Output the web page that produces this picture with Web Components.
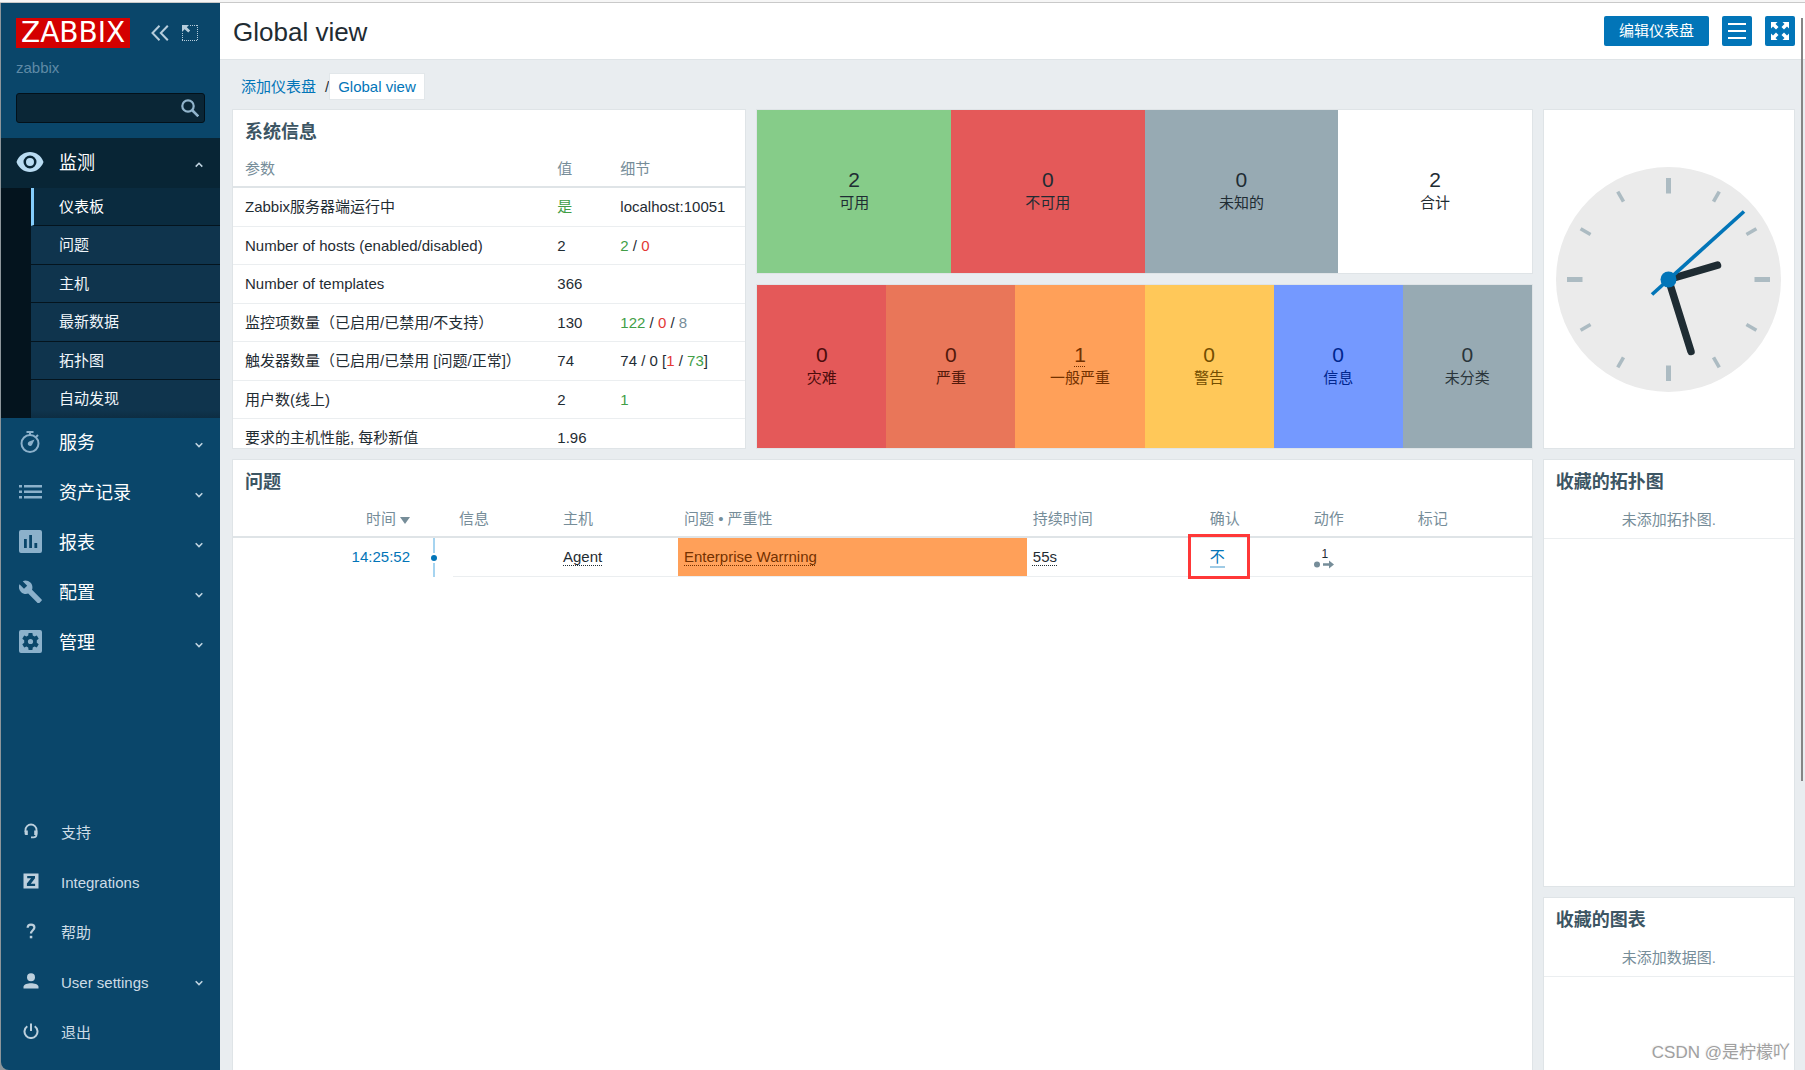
<!DOCTYPE html>
<html lang="zh-CN">
<head>
<meta charset="utf-8">
<title>Global view</title>
<style>
  html, body { margin: 0; height: 100%; }
  body {
    overflow: hidden;
    font: 15px/20px "Liberation Sans", "Noto Sans CJK SC", sans-serif;
    color: #1f2c33;
    background: #e9edf0;
  }
</style>
</head>
<body>
<zbx-app>
  <zbx-sidebar slot="side"></zbx-sidebar>
  <zbx-header slot="top">Global view</zbx-header>
  <zbx-breadcrumbs slot="path"></zbx-breadcrumbs>
  <zbx-widget style="grid-column: span 4; grid-row: span 2" heading="系统信息"><zbx-sysinfo></zbx-sysinfo></zbx-widget>
  <zbx-widget style="grid-column: span 6">
    <zbx-tiles>
      <zbx-tile count="2" style="background:#86cc89">可用</zbx-tile>
      <zbx-tile count="0" style="background:#e45959">不可用</zbx-tile>
      <zbx-tile count="0" style="background:#97aab3">未知的</zbx-tile>
      <zbx-tile count="2">合计</zbx-tile>
    </zbx-tiles>
  </zbx-widget>
  <zbx-widget style="grid-column: span 2; grid-row: span 2"><zbx-clock></zbx-clock></zbx-widget>
  <zbx-widget style="grid-column: span 6">
    <zbx-tiles>
      <zbx-tile count="0" style="background:#e45959;color:#4b0c0c">灾难</zbx-tile>
      <zbx-tile count="0" style="background:#e97659;color:#52190b">严重</zbx-tile>
      <zbx-tile count="1" linked style="background:#ffa059;color:#733100">一般严重</zbx-tile>
      <zbx-tile count="0" style="background:#ffc859;color:#734d00">警告</zbx-tile>
      <zbx-tile count="0" style="background:#7499ff;color:#00268e">信息</zbx-tile>
      <zbx-tile count="0" style="background:#97aab3;color:#2a353a">未分类</zbx-tile>
    </zbx-tiles>
  </zbx-widget>
  <zbx-widget style="grid-column: span 10; grid-row: span 2" heading="问题"><zbx-problems></zbx-problems></zbx-widget>
  <zbx-widget style="grid-column: span 2" heading="收藏的拓扑图"><zbx-empty>未添加拓扑图.</zbx-empty></zbx-widget>
  <zbx-widget style="grid-column: span 2" heading="收藏的图表"><zbx-empty>未添加数据图.</zbx-empty></zbx-widget>
</zbx-app>

<script>
const define = (name, html) => {
  const tpl = document.createElement('template');
  customElements.define(name, class extends HTMLElement {
    connectedCallback() {
      if (this.shadowRoot) return;
      tpl.innerHTML = typeof html === 'function' ? html(this) : html;
      this.attachShadow({ mode: 'open' }).append(tpl.content.cloneNode(true));
    }
  });
};

const ICONS = {
  eye: [28, 20, '<path fill-rule="evenodd" fill="currentColor" d="M14 0C8 0 2.600 3.800 0.500 10 2.600 16 8 20 14 20s11.400-4 13.500-10C25.400 3.800 20 0 14 0zm0 16.500a6.500 6.500 0 1 1 0-13 6.500 6.500 0 0 1 0 13zM14 6a4 4 0 1 0 0 8 4 4 0 0 0 0-8z"/>'],
  timer: [22, 22, '<g fill="none" stroke="currentColor" stroke-width="2"><circle cx="11" cy="12.500" r="8.500"/><path d="M7.500 1h7M11 1v3M17 6l2-2"/></g><path fill="currentColor" d="M15.500 8.500 13.200 13.500a2.300 2.300 0 1 1-3-3z"/>'],
  list: [24, 22, '<path fill="currentColor" d="M1 4h3v2.500H1zM6 4h18v2.500H6zM1 9.500h3V12H1zM6 9.500h18V12H6zM1 15h3v2.500H1zM6 15h18v2.500H6z"/>'],
  chart: [23, 23, '<path fill-rule="evenodd" fill="currentColor" d="M2 0h19a2 2 0 0 1 2 2v19a2 2 0 0 1-2 2H2a2 2 0 0 1-2-2V2a2 2 0 0 1 2-2zM5 9v9h2.800V9zM10.200 5v13h2.800V5zM15.400 13v5h2.800v-5z"/>'],
  wrench: [23, 23, '<path fill="currentColor" d="M22.600 19.400 13 9.800c.9-2.400.4-5.200-1.600-7.200C9.300.5 6.200 0 3.700 1.200L8.200 5.700 5 8.800.500 4.300C-.7 6.800-.1 9.900 2 12c2 2 4.800 2.500 7.200 1.600l9.500 9.500c.4.4 1 .4 1.500 0l2.400-2.300c.4-.4.4-1 0-1.400z"/>'],
  gear: [23, 23, '<path fill-rule="evenodd" fill="currentColor" d="M2 0h19a2 2 0 0 1 2 2v19a2 2 0 0 1-2 2H2a2 2 0 0 1-2-2V2a2 2 0 0 1 2-2zM9.600 3l-.4 2.400-1.700 1-2.300-.9-1.900 3.300 1.900 1.500v2.400l-1.900 1.500 1.900 3.300 2.300-.9 1.700 1 .4 2.400h3.800l.4-2.400 1.700-1 2.300.9 1.900-3.300-1.900-1.500v-2.400l1.900-1.500-1.900-3.300-2.300.9-1.700-1-.4-2.400zM11.500 8.900a2.600 2.600 0 1 1 0 5.200 2.600 2.600 0 0 1 0-5.200z"/>'],
  headset: [16, 16, '<path fill="none" stroke="currentColor" stroke-width="1.800" d="M2.500 9V7a5.500 5.500 0 0 1 11 0v4.500c0 2-1.200 2.900-3 2.900H8"/><path fill="currentColor" d="M1.600 7.500h3.200V12H3a1.500 1.500 0 0 1-1.400-1.600zM14.400 7.500h-3.200V12H13a1.500 1.500 0 0 0 1.400-1.600z"/>'],
  z: [16, 16, '<path fill-rule="evenodd" fill="currentColor" d="M.500.500h15v15H.500zM4.200 3v2.300h3.900L3.900 10.600V13h8.200v-2.300H7.800L12 5.300V3z"/>'],
  help: [16, 16, '<path fill="none" stroke="currentColor" stroke-width="2.200" d="M4.600 4.800C4.700 2.600 6 1.600 8 1.600s3.400 1.100 3.400 3c0 2.600-3.400 2.800-3.400 6"/><path fill="currentColor" d="M6.800 12.800h2.500v2.500H6.800z"/>'],
  user: [16, 16, '<circle cx="8" cy="4.200" r="4" fill="currentColor"/><path fill="currentColor" d="M.500 15.500v-1.800C.500 11.200 5 10.200 8 10.200s7.500 1 7.500 3.500v1.800z"/>'],
  power: [16, 16, '<path fill="none" stroke="currentColor" stroke-width="2" d="M8 .500v7.500M4.300 3.200a6.500 6.500 0 1 0 7.400 0"/>'],
  down: [8, 8, '<path fill="none" stroke="currentColor" stroke-width="1.600" d="M.700 2.300 4 5.600l3.300-3.300"/>'],
  up: [8, 8, '<path fill="none" stroke="currentColor" stroke-width="1.600" d="M.700 5.600 4 2.300l3.300 3.300"/>'],
  search: [18, 18, '<circle cx="7" cy="7" r="5.700" fill="none" stroke="currentColor" stroke-width="2.200"/><path stroke="currentColor" stroke-width="2.600" d="m11 11 6.300 6.300"/>'],
  collapse: [18, 16, '<path fill="none" stroke="currentColor" stroke-width="2" d="M8.500.800 1.500 8l7 7.200M16.800.800 9.800 8l7 7.200"/>'],
  compact: [16, 16, '<path fill="none" stroke="currentColor" stroke-width="1" stroke-dasharray="1 1" d="M8 .500h8M15.500 0v16M15 15.500H0M.500 15V8"/><path fill="currentColor" d="M0 0h7L4.800 2.200l3.400 3.400-1.900 1.900L2.600 4.300 0 7z"/>'],
  menu: [18, 16, '<path stroke="currentColor" stroke-width="2" d="M0 1h18M0 8h18M0 15h18"/>'],
  full: [18, 18, '<g fill="currentColor"><path d="M0 0h6.500L4.500 2l3 3L5 7.500l-3-3-2 2z"/><path d="M18 0v6.500l-2-2-3 3L10.500 5l3-3-2-2z"/><path d="M18 18h-6.500l2-2-3-3 2.500-2.500 3 3 2-2z"/><path d="M0 18v-6.500l2 2 3-3L7.500 13l-3 3 2 2z"/></g>'],
  action: [20, 9, '<circle cx="3" cy="4.500" r="3" fill="currentColor"/><path fill="currentColor" d="M9 3.300h6V.500l5 4-5 4V5.700H9z"/>']
};

define('zbx-icon', el => {
  const [w, h, body] = ICONS[el.getAttribute('name')];
  return `<style>:host{display:inline-flex;flex:none}svg{display:block}</style>
    <svg width="${w}" height="${h}" viewBox="0 0 ${w} ${h}" aria-hidden="true">${body}</svg>`;
});

define('zbx-app', `
  <style>
    :host { display: flex; flex-direction: column; height: 100vh; background: #8d969b; }
    .edge { flex: none; height: 2px; background: #f6f6f6; border-bottom: 1px solid #c9c9c9; }
    .body { flex: 1; min-height: 0; display: flex; padding-left: 1px; }
    main { position: relative; flex: 1; min-width: 0; display: flex; flex-direction: column; overflow: hidden; background: #e9edf0; }
    .grid {
      flex: 1; min-height: 0; overflow: hidden;
      display: grid; grid-template-columns: repeat(12, minmax(0, 1fr)); grid-template-rows: 165px 165px 428px 428px;
      gap: 10px; padding: 0 10px 0 12px;
    }
    .thumb { position: absolute; top: 15px; right: 2px; width: 2px; height: 763px; background: #858585; }
    .mark { position: absolute; right: 15px; bottom: 5px; font-size: 17px; line-height: 24px; color: #a0a0a0; text-shadow: 1px 1px 0 #fff, -1px -1px 0 #f4f4f4; }
  </style>
  <div class="edge"></div>
  <div class="body">
    <slot name="side"></slot>
    <main>
      <slot name="top"></slot>
      <slot name="path"></slot>
      <div class="grid"><slot></slot></div>
      <div class="thumb"></div>
      <div class="mark">CSDN @是柠檬吖</div>
    </main>
  </div>`);

define('zbx-sidebar', `
  <style>
    :host { display: flex; flex-direction: column; flex: none; width: 219px; background: #0a466a; border-bottom-left-radius: 8px; color: #fff; }
    .brand { display: flex; align-items: center; padding: 15px 22px 0 15px; color: #b6cddc; }
    .logo { background: #d40000; color: #fff; font: 28px/30px "DejaVu Sans", sans-serif; padding: 0 5px; text-decoration: none; margin-right: auto; }
    button { border: 0; padding: 0; background: none; color: inherit; display: flex; }
    .brand button + button { margin-left: 13px; }
    .server { padding: 10px 15px 0; color: #5f8aa6; }
    form { display: flex; align-items: center; margin: 15px 15px 15px 15px; height: 28px; border: 1px solid #03111a; border-radius: 3px; background: #0a2636; color: #91b4cc; padding-right: 5px; }
    input { flex: 1; min-width: 0; border: 0; outline: 0; background: none; color: #fff; font: inherit; padding: 0 8px; }
    .sub { background: #04141e; padding-left: 30px; }
    .sub a {
      display: flex; align-items: center; box-sizing: border-box; height: 38px; padding-left: 28px;
      border-bottom: 1px solid #04141e; background: #0f344d; color: #f0f6fa; text-decoration: none;
    }
    .sub a:nth-child(even) { height: 39px; }
    .sub a.on { border-left: 3px solid #84cdfb; padding-left: 25px; background: #0a2b3f; color: #fff; }
    .sub a:last-child { height: 38px; border-bottom: 0; background: linear-gradient(#0f344d 80%, #0d2d42); }
    .foot { margin-top: auto; padding-bottom: 12px; }
  </style>
  <div class="brand">
    <a class="logo" href="#">ZABBIX</a>
    <button aria-label="collapse"><zbx-icon name="collapse"></zbx-icon></button>
    <button aria-label="compact"><zbx-icon name="compact"></zbx-icon></button>
  </div>
  <div class="server">zabbix</div>
  <form><input type="text" aria-label="search"><button type="button" aria-label="search"><zbx-icon name="search"></zbx-icon></button></form>
  <nav>
    <zbx-menu-item icon="eye" caret="up" open>监测</zbx-menu-item>
    <div class="sub">
      <a href="#" class="on">仪表板</a><a href="#">问题</a><a href="#">主机</a><a href="#">最新数据</a><a href="#">拓扑图</a><a href="#">自动发现</a>
    </div>
    <zbx-menu-item icon="timer" caret="down">服务</zbx-menu-item>
    <zbx-menu-item icon="list" caret="down">资产记录</zbx-menu-item>
    <zbx-menu-item icon="chart" caret="down">报表</zbx-menu-item>
    <zbx-menu-item icon="wrench" caret="down">配置</zbx-menu-item>
    <zbx-menu-item icon="gear" caret="down">管理</zbx-menu-item>
  </nav>
  <nav class="foot">
    <zbx-menu-item minor icon="headset">支持</zbx-menu-item>
    <zbx-menu-item minor icon="z">Integrations</zbx-menu-item>
    <zbx-menu-item minor icon="help">帮助</zbx-menu-item>
    <zbx-menu-item minor icon="user" caret="down">User settings</zbx-menu-item>
    <zbx-menu-item minor icon="power">退出</zbx-menu-item>
  </nav>`);

define('zbx-menu-item', el => `
  <style>
    :host { display: block; --icon: #8cb1cb; }
    :host([open]) { background: #082535; --icon: #b9dcf2; }
    :host([minor]) { --icon: #bdd0dd; }
    a { display: flex; align-items: center; height: 50px; padding: 0 17px 0 15px; color: #fff; font-size: 18px; text-decoration: none; }
    :host([minor]) a { font-size: 15px; color: #cddce6; }
    .icon { width: 28px; display: flex; justify-content: center; color: var(--icon); margin-right: 15px; padding-bottom: 3px; }
    :host([minor]) .icon { width: 30px; padding-bottom: 4px; }
    .caret { margin-left: auto; display: flex; color: #bfd3e0; padding-top: 3px; }
    :host([minor]) .caret { padding-top: 0; }
  </style>
  <a href="#"><span class="icon"><zbx-icon name="${el.getAttribute('icon')}"></zbx-icon></span><slot></slot>
  ${el.hasAttribute('caret') ? `<span class="caret"><zbx-icon name="${el.getAttribute('caret')}"></zbx-icon></span>` : ''}</a>`);

define('zbx-header', `
  <style>
    :host { display: flex; align-items: center; flex: none; height: 56px; gap: 13px; padding: 0 10px 0 13px; background: #fff; border-bottom: 1px solid #dfe4e7; }
    h1 { margin: 0 auto 0 0; padding-top: 2px; font-size: 26px; line-height: 32px; font-weight: 400; }
    button { display: flex; align-items: center; justify-content: center; height: 30px; min-width: 30px; padding: 0; border: 0; border-radius: 2px; background: #0275b8; color: #fff; font: inherit; }
    .text { padding: 0 15px; }
  </style>
  <h1><slot></slot></h1>
  <button class="text">编辑仪表盘</button>
  <button aria-label="menu"><zbx-icon name="menu"></zbx-icon></button>
  <button aria-label="fullscreen"><zbx-icon name="full"></zbx-icon></button>`);

define('zbx-breadcrumbs', `
  <style>
    :host { display: flex; align-items: center; flex: none; height: 25px; padding: 14px 20px 10px 21px; }
    a { color: #0275b8; text-decoration: none; }
    span { padding: 0 1px 0 9px; }
    .on { background: #fff; padding: 2px 8px; box-shadow: 0 0 0 1px #e2e7ea; line-height: 21px; }
  </style>
  <a href="#">添加仪表盘</a><span>/</span><a class="on" href="#">Global view</a>`);

define('zbx-widget', el => `
  <style>
    :host { display: flex; flex-direction: column; min-width: 0; overflow: hidden; box-sizing: border-box; background: #fff; border: 1px solid #dfe4e7; }
    h4 { flex: none; margin: 0; padding: 12px 12px 8px; font-size: 18px; line-height: 21px; font-weight: 700; color: #3c5563; }
  </style>
  ${el.hasAttribute('heading') ? `<h4>${el.getAttribute('heading')}</h4>` : ''}<slot></slot>`);

define('zbx-tiles', `<style>:host { display: flex; flex: 1; }</style><slot></slot>`);

define('zbx-tile', el => `
  <style>
    :host { flex: 1; display: flex; flex-direction: column; align-items: center; justify-content: center; line-height: 22px; padding-bottom: 2px; }
    .n { font-size: 21px; line-height: 24px; }
    a { color: inherit; text-decoration: underline dotted 1px; text-underline-offset: 4px; }
  </style>
  ${el.hasAttribute('linked') ? `<a class="n" href="#">${el.getAttribute('count')}</a>` : `<span class="n">${el.getAttribute('count')}</span>`}
  <slot></slot>`);

define('zbx-clock', () => {
  let ticks = '';
  for (let i = 0; i < 12; i++) {
    const big = i % 3 === 0;
    ticks += `<rect transform="rotate(${i * 30})" x="${big ? -2.5 : -1.8}" y="-101.500" width="${big ? 5 : 3.6}" height="${big ? 15.5 : 11.5}"/>`;
  }
  return `
  <style>:host { display: flex; flex: 1; align-items: center; justify-content: center; } svg { width: 225px; height: 225px; }</style>
  <svg viewBox="-112.500 -112.500 225 225" role="img">
    <circle r="112.500" fill="#ebebeb"/><g fill="#acbbc2">${ticks}</g>
    <path stroke="#1f2c33" stroke-width="7.500" stroke-linecap="round" d="M0 0 49-14.300M0 0 22.500 72"/>
    <path stroke="#0275b8" stroke-width="3.700" d="M-16.500 15 75.500-68"/>
    <circle r="8" fill="#0275b8"/>
  </svg>`;
});

const TABLE = `
  table { width: 100%; table-layout: fixed; border-collapse: separate; border-spacing: 0; }
  th { height: 35px; padding: 0 6px; text-align: left; font-weight: 400; color: #768d99; border-bottom: 2px solid #dfe4e7; white-space: nowrap; }
  td { height: 37px; padding: 0 6px; border-bottom: 1px solid #ebeef0; white-space: nowrap; }
  tbody tr:nth-child(odd) td { height: 38px; }`;

define('zbx-sysinfo', `
  <style>
    :host { display: block; } ${TABLE}
    th:first-child, td:first-child { padding-left: 12px; }
    .g { color: #429e47; } .r { color: #e33734; } .y { color: #768d99; }
  </style>
  <table>
    <colgroup><col><col style="width:63px"><col style="width:131px"></colgroup>
    <thead><tr><th>参数</th><th>值</th><th>细节</th></tr></thead>
    <tbody>
      <tr><td>Zabbix服务器端运行中</td><td class="g">是</td><td>localhost:10051</td></tr>
      <tr><td>Number of hosts (enabled/disabled)</td><td>2</td><td><span class="g">2</span> / <span class="r">0</span></td></tr>
      <tr><td>Number of templates</td><td>366</td><td></td></tr>
      <tr><td>监控项数量（已启用/已禁用/不支持）</td><td>130</td><td><span class="g">122</span> / <span class="r">0</span> / <span class="y">8</span></td></tr>
      <tr><td>触发器数量（已启用/已禁用 [问题/正常]）</td><td>74</td><td>74 / 0 [<span class="r">1</span> / <span class="g">73</span>]</td></tr>
      <tr><td>用户数(线上)</td><td>2</td><td class="g">1</td></tr>
      <tr><td>要求的主机性能, 每秒新值</td><td>1.96</td><td></td></tr>
    </tbody>
  </table>`);

define('zbx-problems', `
  <style>
    :host { display: block; } ${TABLE}
    .time { text-align: right; border-bottom-color: transparent; }
    th.time { border-bottom-color: #dfe4e7; }
    .line { border-bottom: 0; padding: 0 0 0 15px; }
    th.line { border-bottom: 2px solid #dfe4e7; }
    .track { display: flex; flex-direction: column; align-items: center; gap: 2px; width: 6px; height: 39px; }
    .track::before, .track::after { content: ""; flex: 1; width: 2px; background: #a6d4f0; }
    .track i { width: 6px; height: 6px; border-radius: 50%; background: #0275b8; }
    a { color: #0275b8; text-decoration: none; }
    .dot { color: inherit; text-decoration: underline dotted 1px; text-underline-offset: 3px; text-decoration-skip-ink: none; }
    .sev { background: #ffa059 padding-box; color: #733100; }
    .sort { display: inline-block; border: 5px solid transparent; border-top: 7px solid #768d99; border-bottom: 0; margin-left: 4px; }
    .ack { position: relative; }
    .ack a { display: inline-block; line-height: 18px; border-bottom: 2px solid #a0cbe5; margin-top: 2px; }
    .ack::after { content: ""; position: absolute; left: -16px; top: -4px; width: 56px; height: 39px; border: 3px solid #ff3838; }
    .act { display: inline-flex; flex-direction: column; align-items: center; vertical-align: middle; color: #768d99; }
    .act b { font-size: 12px; line-height: 12px; font-weight: 400; color: #1f2c33; padding: 2px 0 0 2px; }
  </style>
  <table>
    <colgroup><col style="width:183px"><col style="width:37px"><col style="width:104px"><col style="width:121px"><col><col style="width:177px"><col style="width:104px"><col style="width:104px"><col style="width:120px"></colgroup>
    <thead><tr><th class="time">时间<span class="sort"></span></th><th class="line"></th><th>信息</th><th>主机</th><th>问题 • 严重性</th><th>持续时间</th><th>确认</th><th>动作</th><th>标记</th></tr></thead>
    <tbody><tr>
      <td class="time"><a href="#">14:25:52</a></td><td class="line"><div class="track"><i></i></div></td><td></td>
      <td><a class="dot" href="#">Agent</a></td><td class="sev"><a class="dot" href="#">Enterprise Warrning</a></td>
      <td><a class="dot" href="#">55s</a></td><td class="ack"><a href="#">不</a></td>
      <td><span class="act"><b>1</b><zbx-icon name="action"></zbx-icon></span></td><td></td>
    </tr></tbody>
  </table>`);

define('zbx-empty', `
  <style>:host { display: flex; align-items: center; justify-content: center; height: 37px; color: #768d99; border-bottom: 1px solid #ebeef0; }</style><slot></slot>`);
</script>
</body>
</html>
